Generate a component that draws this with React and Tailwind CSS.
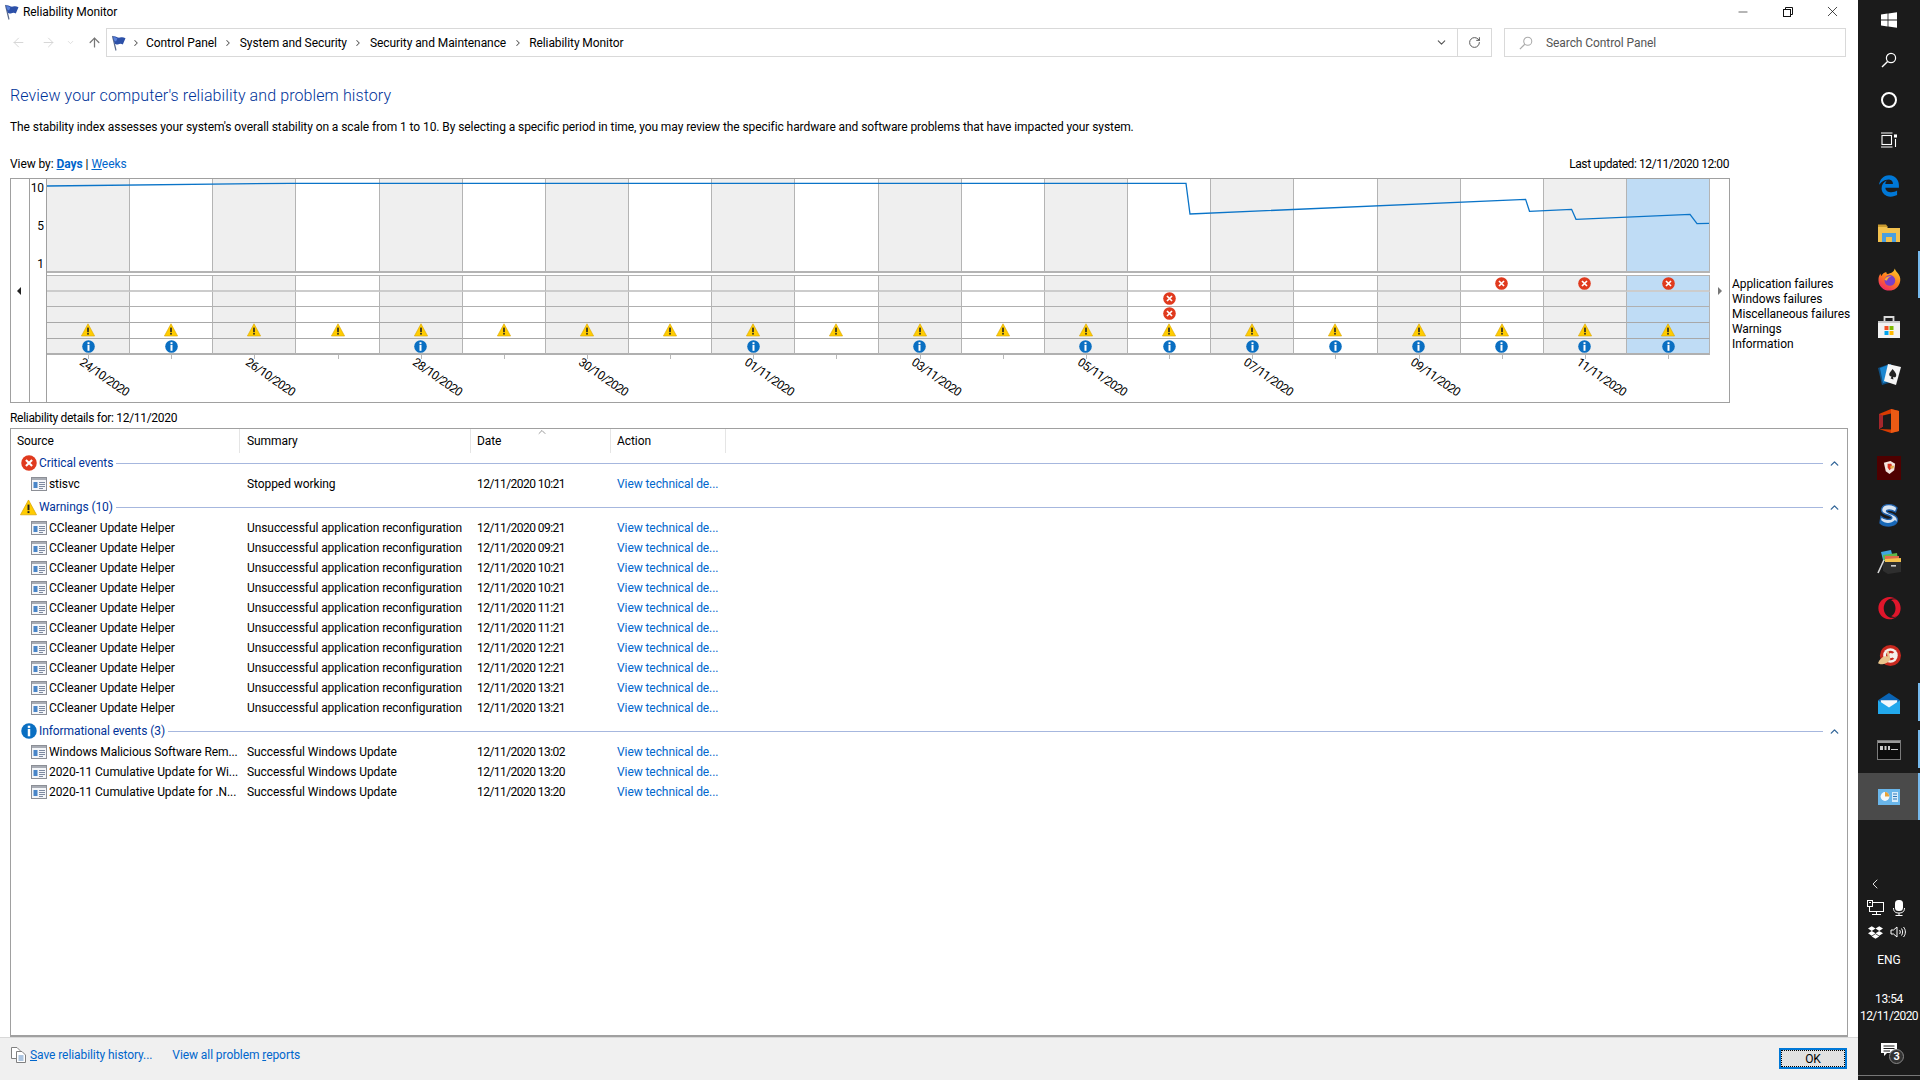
import React from 'react';
import { ArrowLeft, ArrowRight, ArrowUp, ChevronDown, ChevronRight, ChevronUp, ChevronLeft, RotateCw, Minus, X } from 'lucide-react';
import { FaDropbox, FaEdgeLegacy, FaOpera } from 'react-icons/fa';

const FlagIcon = ({ className = '' }) => (
  <svg className={className} viewBox="0 0 16 16" width="16" height="16">
    <path d="M2.5 1 L6 15.5" stroke="#5a6a8a" strokeWidth="1.2" fill="none" />
    <path d="M2.8 1.5 C5.5 0.2 7.5 3.4 10 2.6 C12 2 13.5 2.2 15.5 3.2 L12.8 9.4 C11 8.4 9.5 8.8 7.8 9.5 C6.6 9.9 5.6 9 4.6 8.4 Z" fill="#2c50a8" />
    <path d="M3.4 2 C5 1.6 6 3 7.4 3.4 L6 6.6 C5.4 6 4.8 5.6 4.2 5.4 Z" fill="#5a80d8" />
  </svg>
);

const WarnIcon = ({ size = 14 }) => (
  <svg viewBox="0 0 14 14" width={size} height={size}>
    <path d="M7 0.8 L13.6 13 H0.4 Z" fill="#fc0" stroke="#d9a400" strokeWidth="0.6" strokeLinejoin="round" />
    <rect x="6.2" y="4.6" width="1.6" height="4.6" fill="#222" />
    <rect x="6.2" y="10" width="1.6" height="1.6" fill="#222" />
  </svg>
);

const InfoIcon = ({ size = 13 }) => (
  <svg viewBox="0 0 13 13" width={size} height={size}>
    <circle cx="6.5" cy="6.5" r="6.3" fill="#0a6fc2" />
    <rect x="5.5" y="2.2" width="2" height="1.8" fill="#fff" />
    <rect x="5.5" y="4.8" width="2" height="6" fill="#fff" />
  </svg>
);

const ErrorIcon = ({ size = 13 }) => (
  <svg viewBox="0 0 13 13" width={size} height={size}>
    <circle cx="6.5" cy="6.5" r="6.3" fill="#e03a1e" />
    <path d="M4 4 L9 9 M9 4 L4 9" stroke="#fff" strokeWidth="1.7" />
  </svg>
);

const RowIcon = () => (
  <svg viewBox="0 0 16 16" width="16" height="16" className="shrink-0">
    <rect x="0.5" y="1.5" width="15" height="13" fill="#f4f6f9" stroke="#8c8f96" />
    <rect x="1" y="2" width="14" height="2" fill="#a8acb4" />
    <rect x="2.5" y="6" width="4" height="6" fill="#4a86c8" />
    <path d="M8 6.5 H14 M8 8.5 H14 M8 10.5 H14 M8 12.5 H12" stroke="#7d8aa0" strokeWidth="1" />
  </svg>
);

const RestoreIcon = () => (
  <svg viewBox="0 0 10 10" width="10" height="10" fill="none" stroke="#111" strokeWidth="1">
    <rect x="0.5" y="2.5" width="7" height="7" />
    <path d="M2.5 2.5 V0.5 H9.5 V7.5 H7.5" />
  </svg>
);

const SearchGlass = ({ color = '#aaa', size = 14 }) => (
  <svg viewBox="0 0 16 16" width={size} height={size} fill="none" stroke={color} strokeWidth="1.2">
    <circle cx="10" cy="6" r="4.6" />
    <path d="M6.6 9.4 L1 15" strokeWidth="1.4" />
  </svg>
);

const StartIcon = () => (
  <svg viewBox="0 0 16 16" width="16" height="16" fill="#fff">
    <path d="M0 2.4 L6.6 1.5 V7.6 H0 Z M7.4 1.4 L16 0.2 V7.6 H7.4 Z M0 8.4 H6.6 V14.5 L0 13.6 Z M7.4 8.4 H16 V15.8 L7.4 14.6 Z" />
  </svg>
);

const TaskViewIcon = () => (
  <svg viewBox="0 0 16 16" width="16" height="16" fill="none" stroke="#fff" strokeWidth="1.1">
    <rect x="1" y="3.5" width="9.5" height="9" />
    <path d="M0 1 H11.5 M0 15 H11.5" />
    <rect x="13.5" y="3" width="2" height="2" fill="#fff" />
    <path d="M14.5 7 V15" />
  </svg>
);

const ExplorerIcon = () => (
  <svg viewBox="0 0 22 18" width="22" height="18">
    <path d="M0 2 H8 L10 4 H22 V18 H0 Z" fill="#f2c14e" />
    <path d="M0 0.5 H8 L10 3 H0 Z" fill="#c99a2e" />
    <path d="M4 18 V9 H18 V18 H14 V13 H8 V18 Z" fill="#4a9fe0" />
    <rect x="8" y="13" width="6" height="5" fill="#f2c14e" />
  </svg>
);

const FirefoxIcon = () => (
  <svg viewBox="0 0 24 24" width="23" height="23">
    <defs>
      <linearGradient id="ff" x1="0.8" y1="0" x2="0.2" y2="1">
        <stop offset="0" stopColor="#ffcb2e" />
        <stop offset="0.5" stopColor="#ff7a1c" />
        <stop offset="1" stopColor="#f0206e" />
      </linearGradient>
    </defs>
    <path d="M17.5 0.5 C18 3 20 4 21.5 6.5 C23.5 9.5 23.8 13 22.6 16 C21 20.6 17 23.6 12 23.6 C5.5 23.6 0.5 18.6 0.5 12.4 C0.5 10 1.2 7.6 2.6 5.8 C2.6 7 3 7.8 3.6 8.4 C4.6 6 6.6 4.4 8.8 4.2 C8.4 5.4 9 6 10.2 6.2 C13 5.4 16.6 4.6 17.5 0.5 Z" fill="url(#ff)" />
    <circle cx="12.4" cy="13" r="5.6" fill="#7a3fc8" />
    <path d="M6.8 12 C8 9.5 11 8.2 14 8.6 C11.6 9.4 10 10.6 9.4 13 C8.6 13.4 7.6 13 6.8 12 Z" fill="#ffb02e" />
  </svg>
);

const StoreIcon = () => (
  <svg viewBox="0 0 24 24" width="24" height="24">
    <path d="M7.5 6 V2 H16.5 V6" fill="none" stroke="#d8d8d8" strokeWidth="1.8" />
    <rect x="1" y="6" width="22" height="17" fill="#f2f2f2" />
    <rect x="1" y="6" width="22" height="2" fill="#c8c8c8" />
    <rect x="7.5" y="11" width="4" height="4" fill="#f25022" />
    <rect x="12.5" y="11" width="4" height="4" fill="#7fba00" />
    <rect x="7.5" y="16" width="4" height="4" fill="#00a4ef" />
    <rect x="12.5" y="16" width="4" height="4" fill="#ffb900" />
  </svg>
);

const SolitaireIcon = () => (
  <svg viewBox="0 0 24 24" width="24" height="24">
    <path d="M1 6 L12 2 L15 20 L5 23 Z" fill="#0f4f82" />
    <path d="M3 6 L14 2 L16 18 L6 21 Z" fill="#1a86d0" />
    <path d="M11 2 L24 5 L19 23 L7 19 Z" fill="#f5f5f5" />
    <path d="M15.5 7 C18 10 20 12 19 14.4 C18 15.8 16.6 15.4 16 14.8 L16.4 17.4 L13.6 16.6 L14.6 14.4 C13.6 14.6 12 14 12.2 12 C12.6 10 14.6 9 15.5 7 Z" fill="#222" />
  </svg>
);

const OfficeIcon = () => (
  <svg viewBox="0 0 20 24" width="20" height="24">
    <path d="M0 5 L12 0 L20 2 V22 L12 24 L0 20 L12 20.5 V4.5 L4 6.5 V17.5 L0 20 Z" fill="#d83b01" />
    <path d="M12 0 L20 2 V22 L12 24 Z" fill="#eb5a14" />
    <path d="M0 5 L4 6.5 V17.5 L0 20 Z" fill="#a4262c" />
  </svg>
);

const DefenderIcon = () => (
  <div className="flex h-[24px] w-[24px] items-center justify-center bg-[#4e0000]">
    <svg viewBox="0 0 16 16" width="15" height="15">
      <path d="M2 3 L9 1 L14 4 L13 11 L8 15 L4 12 Z" fill="#f4e6e0" />
      <path d="M6 4 L10 4 L11 8 L8 11 L6 8 Z" fill="#d83020" />
      <path d="M9 6 L13 6 L12 9 L9 9 Z" fill="#e8b04a" />
    </svg>
  </div>
);

const SIcon = () => (
  <svg viewBox="0 0 20 24" width="20" height="24">
    <path d="M18 5 C15 1 5 0 3 5 C1 10 6 11 10 12.5 C13 13.6 13.5 15 12 16 C9.5 17 5 16 2 13.5 L1 20 C5 24 15 24.5 18 19 C20 14 15 11.5 10 10 C7.5 9 7 8 8 7.4 C10 6.6 13.5 7.4 16.5 9 Z" fill="#d8e4f2" stroke="#1f5fa8" strokeWidth="1.4" />
    <path d="M1 20 C5 24 15 24.5 18 19 L16 17 C12 21 6 21 2 17 Z" fill="#1668b8" />
  </svg>
);

const ArchiveIcon = () => (
  <svg viewBox="0 0 24 24" width="24" height="24">
    <path d="M4 2 L14 0 L16 8 L6 10 Z" fill="#3fa6e0" />
    <path d="M6 5 L20 3 L21 10 L7 11 Z" fill="#5fb84a" />
    <path d="M8 6 L22 6 L22 11 L8 11 Z" fill="#e06a4a" />
    <path d="M8 9 L24 8 V12 L8 13 Z" fill="#f2c14e" />
    <path d="M6 12 H24 V22 L11 24 L6 21 Z" fill="#2e2e2e" />
    <rect x="14" y="15" width="5" height="1.6" fill="#ccc" />
    <path d="M1 23 L7 10" stroke="#d8d8d8" strokeWidth="1.6" />
  </svg>
);

const CCleanerIcon = () => (
  <svg viewBox="0 0 24 24" width="23" height="23">
    <circle cx="13" cy="12" r="11" fill="#c8281e" />
    <circle cx="13" cy="12" r="7.6" fill="#f4f0ec" />
    <path d="M17 8.6 A5 5 0 1 0 17 15.4 L15 14 A2.6 2.6 0 1 1 15 10 Z" fill="#c8281e" />
    <path d="M0 20 C2 15 6 12 10 13 L9 8 L11 7 L13 16 C10 20 6 23 0 20 Z" fill="#e8c48c" />
  </svg>
);

const MailIcon = () => (
  <svg viewBox="0 0 24 24" width="24" height="22">
    <path d="M0 9 L12 1 L24 9 L12 17 Z" fill="#0a64b4" />
    <path d="M3 9 H21 V14 L12 19 L3 14 Z" fill="#f4f8fc" />
    <path d="M0 9 L12 17 L24 9 V24 H0 Z" fill="#22a8ec" />
  </svg>
);

const ConsoleIcon = () => (
  <svg viewBox="0 0 24 20" width="24" height="20">
    <rect x="0.5" y="0.5" width="23" height="19" fill="#0c0c0c" stroke="#7a7a7a" />
    <rect x="1" y="1" width="22" height="2" fill="#9a9a9a" />
    <rect x="3" y="6" width="3" height="4" fill="#ccc" />
    <rect x="7.5" y="6" width="2" height="4" fill="#ccc" />
    <rect x="11" y="6" width="2" height="4" fill="#ccc" />
    <rect x="14" y="9" width="7" height="1" fill="#ccc" />
  </svg>
);

const ReliabilityIcon = () => (
  <svg viewBox="0 0 22 16" width="22" height="16">
    <rect width="22" height="16" fill="#6ab6ea" />
    <circle cx="7" cy="7.5" r="4.4" fill="#f4f8fc" />
    <path d="M7 7.5 V3.1 A4.4 4.4 0 0 1 11.4 7.5 Z" fill="#e8a33a" />
    <rect x="14" y="3" width="6" height="10" fill="#d8ecfa" />
    <path d="M15 5 H19 M15 7.5 H19 M15 10 H19" stroke="#2f76b8" strokeWidth="1" />
  </svg>
);

const NetworkIcon = () => (
  <svg viewBox="0 0 18 16" width="18" height="16" fill="none" stroke="#fff" strokeWidth="1">
    <rect x="2.5" y="2.5" width="14" height="9" />
    <rect x="0.5" y="0.5" width="5" height="6" fill="#1b1b1b" />
    <rect x="2" y="2" width="2" height="1" fill="#fff" stroke="none" />
    <path d="M9.5 11.5 V14.5 M5 14.5 H14" />
  </svg>
);

const MicIcon = () => (
  <svg viewBox="0 0 12 16" width="12" height="16">
    <rect x="2" y="0" width="8" height="11" rx="3.5" fill="#fff" />
    <path d="M0.5 8 C0.5 12 3 13 6 13 C9 13 11.5 12 11.5 8" fill="none" stroke="#fff" />
    <path d="M6 13 V15.5 M2.5 15.5 H9.5" stroke="#fff" />
  </svg>
);

const VolumeIcon = () => (
  <svg viewBox="0 0 17 14" width="17" height="14" fill="none" stroke="#fff" strokeWidth="1">
    <path d="M1 5 H3.5 L7 2 V12 L3.5 9 H1 Z" />
    <path d="M9.5 5 C10.5 6 10.5 8 9.5 9 M11.5 3.5 C13 5.5 13 8.5 11.5 10.5 M13.5 2 C16 5 16 9 13.5 12" />
  </svg>
);

const NotifyIcon = () => (
  <svg viewBox="0 0 16 16" width="16" height="16">
    <path d="M0 1 H16 V11 H6 L3 14 V11 H0 Z" fill="#fff" />
    <path d="M2.5 4 H13.5 M2.5 6.5 H13.5 M2.5 9 H9" stroke="#1b1b1b" strokeWidth="1" />
  </svg>
);

const FileStackIcon = () => (
  <svg viewBox="0 0 15 16" width="15" height="16" fill="#fff" stroke="#808080" strokeWidth="1">
    <path d="M0.5 0.5 H6 L9 3.5 V11.5 H0.5 Z" />
    <path d="M5.5 4.5 H11 L14.5 8 V15.5 H5.5 Z" />
    <path d="M7.5 9 H12.5 M7.5 11 H12.5 M7.5 13 H12.5" stroke="#5a8ac0" />
  </svg>
);

const DAYS = Array.from({ length: 20 }, (_, i) => i);
const DATE_LABELS = {
  0: '24/10/2020', 2: '26/10/2020', 4: '28/10/2020', 6: '30/10/2020', 8: '01/11/2020',
  10: '03/11/2020', 12: '05/11/2020', 14: '07/11/2020', 16: '09/11/2020', 18: '11/11/2020',
};
const INFO_DAYS = [0, 1, 4, 8, 10, 12, 13, 14, 15, 16, 17, 18, 19];
const APP_FAIL_DAYS = [17, 18, 19];
const LEGEND = ['Application failures', 'Windows failures', 'Miscellaneous failures', 'Warnings', 'Information'];

const ChartColumn = ({ day }) => {
  const selected = day === 19;
  const bg = selected ? 'bg-[#bfdcf5]' : day % 2 === 0 ? 'bg-[#efefef]' : 'bg-white';
  return (
    <div className="flex min-w-0 flex-1 flex-col">
      <div className={`h-[94px] border-r border-b-2 border-r-[#b4b4b4] border-b-[#b4b4b4] ${bg}`} />
      <div className="h-[2px] bg-white" />
      <div className={`flex h-[17px] items-center justify-center border-t border-r border-b-2 border-t-[#b4b4b4] border-r-[#b4b4b4] border-b-[#cccccc] ${bg}`}>
        {APP_FAIL_DAYS.includes(day) && <ErrorIcon />}
      </div>
      <div className={`flex h-[15px] items-center justify-center overflow-visible border-r border-b border-r-[#b4b4b4] border-b-[#b0b0b0] pb-[2px] ${bg}`}>
        {day === 13 && <ErrorIcon />}
      </div>
      <div className={`flex h-[16px] items-center justify-center border-r border-b border-r-[#b4b4b4] border-b-[#a8a8a8] pb-[2px] ${bg}`}>
        {day === 13 && <ErrorIcon />}
      </div>
      <div className={`flex h-[16px] items-center justify-center border-r border-b border-r-[#b4b4b4] border-b-[#a8a8a8] pb-[2px] ${bg}`}>
        <WarnIcon />
      </div>
      <div className={`flex h-[16px] items-center justify-center border-r border-b-2 border-r-[#b4b4b4] border-b-[#b0b0b0] ${bg}`}>
        {INFO_DAYS.includes(day) && <InfoIcon />}
      </div>
      <div className="flex flex-1 flex-col items-center bg-white">
        <div className="h-[4px] w-px bg-[#b8b8b8]" />
        {DATE_LABELS[day] && (
          <div className="mt-[10px] h-[16px] translate-x-[16px] rotate-[35deg] whitespace-nowrap leading-[16px] tracking-[-0.7px]">
            {DATE_LABELS[day]}
          </div>
        )}
      </div>
    </div>
  );
};

const StabilityChart = () => (
  <div className="ml-[10px] mt-[6px] flex h-[225px] w-[1720px] shrink-0 border border-[#a0a0a0]">
    <div className="flex w-[19px] items-center justify-center border-r border-[#a0a0a0] pr-[2px]">
      <div className="h-0 w-0 border-y-[4px] border-r-[4px] border-y-transparent border-r-[#222]" />
    </div>
    <div className="flex w-[17px] flex-col gap-[22px] border-r border-[#a0a0a0] pr-[2px] pt-[1px] text-right leading-[16px]">
      <div className="h-[16px]">10</div>
      <div className="h-[16px]">5</div>
      <div className="h-[16px]">1</div>
    </div>
    <div className="relative flex w-[1663px]">
      {DAYS.map((d) => (
        <ChartColumn key={d} day={d} />
      ))}
      <svg className="absolute left-0 top-0" width="1663" height="93" viewBox="0 0 1663 93" fill="none">
        <polyline
          points="0,7 243,4.3 1139,4.3 1143,35 1478.6,20.3 1482.5,32.3 1524.6,30.3 1529,40.3 1643,35.3 1650,44.7 1662,44.3"
          stroke="#0a74c8"
          strokeWidth="1.3"
        />
      </svg>
    </div>
    <div className="flex flex-1 items-center justify-center">
      <div className="h-0 w-0 border-y-[4px] border-l-[4px] border-y-transparent border-l-[#777]" />
    </div>
  </div>
);

const Columns = ({ source, summary, date, action, actionClass = 'text-[#0066cc]' }) => (
  <div className="flex h-[20px] items-center">
    <div className="flex w-[229px] items-center gap-[2px] overflow-hidden pl-[20px] whitespace-nowrap">
      <RowIcon />
      <span>{source}</span>
    </div>
    <div className="w-[231px] pl-[7px] whitespace-nowrap">{summary}</div>
    <div className="w-[140px] pl-[6px] whitespace-nowrap tracking-[-0.55px]">{date}</div>
    <div className={`pl-[6px] whitespace-nowrap ${actionClass}`}>{action}</div>
  </div>
);

const Group = ({ icon, title, rows }) => (
  <div className="flex flex-col">
    <div className="flex h-[21px] items-center pb-[1px] pl-[7px] pr-[6px]">
      <span className="flex w-[21px] shrink-0 justify-center">{icon}</span>
      <span className="text-[#003399] whitespace-nowrap">{title}</span>
      <div className="mx-[3px] h-px flex-1 bg-[#a6b7de]" />
      <ChevronUp size={13} strokeWidth={2.5} className="ml-[2px] text-[#336699]" />
    </div>
    {rows.map((r, i) => (
      <Columns key={i} source={r.source} summary={r.summary} date={r.date} action="View technical de..." />
    ))}
  </div>
);

const CC = 'CCleaner Update Helper';
const BAD = 'Unsuccessful application reconfiguration';
const OK_UPDATE = 'Successful Windows Update';

const critical = [{ source: 'stisvc', summary: 'Stopped working', date: '12/11/2020 10:21' }];
const warnings = ['09:21', '09:21', '10:21', '10:21', '11:21', '11:21', '12:21', '12:21', '13:21', '13:21'].map((t) => ({
  source: CC,
  summary: BAD,
  date: `12/11/2020 ${t}`,
}));
const informational = [
  { source: 'Windows Malicious Software Rem...', summary: OK_UPDATE, date: '12/11/2020 13:02' },
  { source: '2020-11 Cumulative Update for Wi...', summary: OK_UPDATE, date: '12/11/2020 13:20' },
  { source: '2020-11 Cumulative Update for .N...', summary: OK_UPDATE, date: '12/11/2020 13:20' },
];

const DetailsTable = () => (
  <div className="ml-[10px] mt-[2px] flex min-h-0 w-[1838px] flex-1 flex-col border border-b-2 border-[#a0a0a0]">
    <div className="flex h-[24px] shrink-0 items-center">
      <div className="flex h-full w-[229px] items-center border-r border-[#e5e5e5] pl-[6px]">Source</div>
      <div className="flex h-full w-[231px] items-center border-r border-[#e5e5e5] pl-[7px]">Summary</div>
      <div className="relative flex h-full w-[140px] items-center border-r border-[#e5e5e5] pl-[6px]">
        Date
        <ChevronUp size={12} strokeWidth={1.2} className="absolute left-[65px] top-[-3px] text-[#555]" />
      </div>
      <div className="flex h-full w-[115px] items-center border-r border-[#e5e5e5] pl-[6px]">Action</div>
    </div>
    <div className="flex flex-col gap-[3px]">
      <Group icon={<ErrorIcon size={16} />} title="Critical events" rows={critical} />
      <Group icon={<WarnIcon size={17} />} title="Warnings (10)" rows={warnings} />
      <Group icon={<InfoIcon size={16} />} title="Informational events (3)" rows={informational} />
    </div>
  </div>
);

const Footer = () => (
  <div className="flex h-[43px] shrink-0 items-start border-t border-[#d8d8d8] bg-[#f0f0f0] pl-[11px]">
    <div className="mt-[9px] flex items-center">
      <FileStackIcon />
      <a className="ml-[4px] text-[#0066cc]">
        <span className="underline">S</span>ave reliability history...
      </a>
      <a className="ml-[20px] text-[#0066cc]">
        View all problem <span className="underline">r</span>eports
      </a>
    </div>
    <button className="ml-auto mr-[11px] mt-[10px] flex h-[21px] w-[68px] items-center justify-center border-2 border-[#0078d7] bg-[#e1e1e1] outline-1 -outline-offset-3 outline-dotted outline-black">
      OK
    </button>
  </div>
);

const Slot = ({ children, active, bar }) => (
  <div className={`relative flex h-[47px] w-full items-center justify-center ${active ? 'bg-[#4a4a4a]' : ''}`}>
    {children}
    {bar && <div className={`absolute right-0 w-[2px] bg-[#76b9ed] ${bar}`} />}
  </div>
);

const SysSlot = ({ children }) => <div className="flex h-[40px] w-full items-center justify-center">{children}</div>;

const Taskbar = () => (
  <div className="flex h-full w-[62px] shrink-0 flex-col items-center bg-[#1b1b1b] text-white">
    <SysSlot><StartIcon /></SysSlot>
    <SysSlot><SearchGlass color="#fff" size={16} /></SysSlot>
    <SysSlot><div className="h-[16px] w-[16px] rounded-full border-2 border-white" /></SysSlot>
    <SysSlot><TaskViewIcon /></SysSlot>
    <div className="mt-[2px] flex w-full flex-col">
      <Slot><FaEdgeLegacy size={22} color="#0078d7" /></Slot>
      <Slot><ExplorerIcon /></Slot>
      <Slot bar="top-[-5px] bottom-[5px]"><FirefoxIcon /></Slot>
      <Slot><StoreIcon /></Slot>
      <Slot><SolitaireIcon /></Slot>
      <Slot><OfficeIcon /></Slot>
      <Slot><DefenderIcon /></Slot>
      <Slot><SIcon /></Slot>
      <Slot><ArchiveIcon /></Slot>
      <Slot><FaOpera size={23} color="#e0162b" /></Slot>
      <Slot><CCleanerIcon /></Slot>
      <Slot bar="top-[4px] bottom-[5px]"><MailIcon /></Slot>
      <Slot bar="top-[4px] bottom-[5px]"><ConsoleIcon /></Slot>
      <Slot active bar="top-[0px] bottom-[0px]"><ReliabilityIcon /></Slot>
    </div>
    <div className="flex-1" />
    <div className="flex h-[24px] w-full items-center pl-[9px]">
      <ChevronLeft size={16} strokeWidth={1.3} />
    </div>
    <div className="flex h-[24px] w-full items-center pl-[6px]">
      <div className="flex w-[23px] justify-center"><NetworkIcon /></div>
      <div className="flex w-[23px] justify-center"><MicIcon /></div>
    </div>
    <div className="flex h-[24px] w-full items-center pl-[6px]">
      <div className="flex w-[23px] justify-center"><FaDropbox size={15} /></div>
      <div className="flex w-[23px] justify-center"><VolumeIcon /></div>
    </div>
    <div className="flex h-[32px] items-center">ENG</div>
    <div className="mt-[15px] h-[16px] leading-[16px] tracking-[-0.4px]">13:54</div>
    <div className="mt-[1px] h-[16px] whitespace-nowrap leading-[16px] tracking-[-0.6px]">12/11/2020</div>
    <div className="relative flex h-[51px] w-full items-center justify-center">
      <NotifyIcon />
      <div className="absolute left-[31px] top-[25px] flex h-[15px] w-[15px] items-center justify-center rounded-full border border-[#888] bg-[#333] text-[11px] font-bold leading-none">3</div>
    </div>
    <div className="h-[5px] w-full border-t border-[#777]" />
  </div>
);

const TitleBar = () => (
  <div className="flex h-[28px] shrink-0 items-center pb-[5px] pl-[3px]">
    <FlagIcon />
    <span className="ml-[4px]">Reliability Monitor</span>
    <div className="ml-auto flex items-center">
      <div className="flex w-[45px] justify-center"><Minus size={14} strokeWidth={1} /></div>
      <div className="flex w-[45px] justify-center"><RestoreIcon /></div>
      <div className="flex w-[45px] justify-center"><X size={17} strokeWidth={1} /></div>
      <div className="w-[3px]" />
    </div>
  </div>
);

const Crumb = ({ children }) => (
  <>
    <span className="flex w-[23px] shrink-0 justify-center">
      <ChevronRight size={10} strokeWidth={2.5} className="text-[#555]" />
    </span>
    <span className="whitespace-nowrap">{children}</span>
  </>
);

const AddressBar = () => (
  <div className="flex h-[29px] shrink-0 items-stretch">
    <div className="flex w-[106px] shrink-0 items-center">
      <ArrowLeft size={15} strokeWidth={1.5} className="ml-[11px] text-[#d4d4d4]" />
      <ArrowRight size={15} strokeWidth={1.5} className="ml-[15px] text-[#d4d4d4]" />
      <ChevronDown size={9} strokeWidth={2} className="ml-[10px] text-[#d4d4d4]" />
      <ArrowUp size={15} strokeWidth={2} className="ml-[12px] text-[#777]" />
    </div>
    <div className="flex w-[1386px] items-center border border-[#d9d9d9]">
      <FlagIcon className="ml-[3px]" />
      <span className="flex w-[20px] shrink-0 justify-center">
        <ChevronRight size={10} strokeWidth={2.5} className="text-[#555]" />
      </span>
      <span className="whitespace-nowrap">Control Panel</span>
      <Crumb>System and Security</Crumb>
      <Crumb>Security and Maintenance</Crumb>
      <Crumb>Reliability Monitor</Crumb>
      <div className="ml-auto flex h-full items-center border-r border-[#d9d9d9] pr-[9px]">
        <ChevronDown size={13} strokeWidth={2} className="text-[#555]" />
      </div>
      <div className="flex h-full w-[33px] items-center justify-center">
        <RotateCw size={13} strokeWidth={1.8} className="text-[#555]" />
      </div>
    </div>
    <div className="ml-[12px] flex w-[342px] items-center border border-[#d9d9d9] pl-[14px] text-[#555]">
      <SearchGlass />
      <span className="ml-[13px]">Search Control Panel</span>
    </div>
  </div>
);

export default function App() {
  return (
    <div className="flex h-[1080px] w-[1920px] overflow-hidden bg-white font-['Roboto',sans-serif] text-[12px] leading-[16px] tracking-[-0.08px] text-black">
      <div className="flex min-w-0 flex-1 flex-col">
        <TitleBar />
        <AddressBar />
        <h1 className="ml-[10px] mt-[27px] h-[24px] text-[16px] font-light leading-[24px] tracking-[0.1px] text-[#003399]">
          Review your computer's reliability and problem history
        </h1>
        <p className="ml-[10px] mt-[11px] h-[16px] whitespace-nowrap">
          The stability index assesses your system's overall stability on a scale from 1 to 10. By selecting a specific period in time, you may review the specific hardware and software problems that have impacted your system.
        </p>
        <div className="ml-[10px] mt-[21px] flex h-[16px] w-[1719px] whitespace-nowrap">
          <span>View by:</span>
          <a className="ml-[3px] font-bold text-[#0066cc]"><span className="underline">D</span>ays</a>
          <span className="mx-[3px]">|</span>
          <a className="text-[#0066cc]"><span className="underline">W</span>eeks</a>
          <span className="ml-auto tracking-[-0.42px]">Last updated: 12/11/2020 12:00</span>
        </div>
        <div className="relative">
          <StabilityChart />
          <div className="pointer-events-none absolute left-[1732px] top-[105px] flex flex-col whitespace-nowrap leading-[15px]">
            {LEGEND.map((l) => (
              <span key={l}>{l}</span>
            ))}
          </div>
        </div>
        <div className="ml-[10px] mt-[7px] h-[16px] tracking-[-0.3px]">Reliability details for: 12/11/2020</div>
        <DetailsTable />
        <Footer />
      </div>
      <Taskbar />
    </div>
  );
}
